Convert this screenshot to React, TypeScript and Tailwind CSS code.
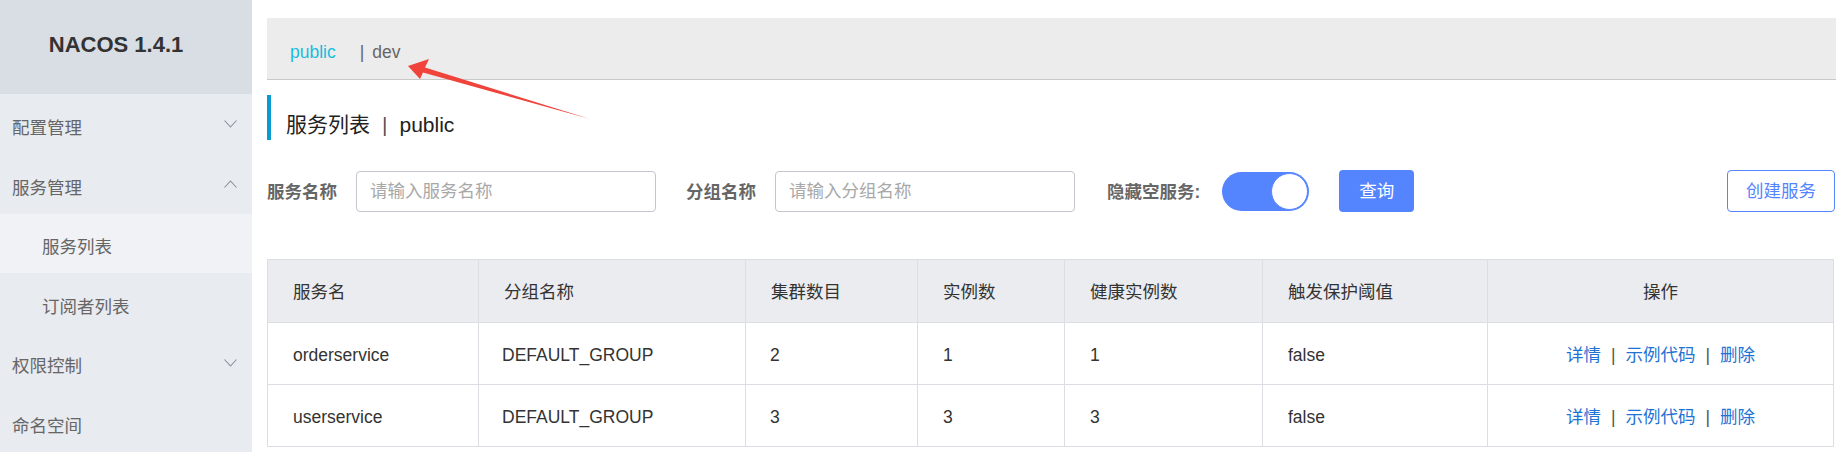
import React from "react";

const FONT = { fontFamily: '"Liberation Sans", Arial, "Noto Sans CJK SC", sans-serif' };

function Chevron({ up }: { up?: boolean }) {
  return (
    <svg width="13" height="8" viewBox="0 0 13 8" className="shrink-0">
      <path
        d={up ? "M0.5 7.5 L6.5 1 L12.5 7.5" : "M0.5 0.5 L6.5 7 L12.5 0.5"}
        fill="none"
        stroke="#8a8f99"
        strokeWidth="1.1"
      />
    </svg>
  );
}

function MenuItem({ label, chevron, up }: { label: string; chevron?: boolean; up?: boolean }) {
  return (
    <div className="h-[60px] flex items-center justify-between pl-[12px] pr-[15px] text-[17.5px] text-[#666]">
      <span className="pt-[8px]">{label}</span>
      {chevron ? <Chevron up={up} /> : null}
    </div>
  );
}

function SubItem({ label, active }: { label: string; active?: boolean }) {
  return (
    <div
      className={
        "h-[60px] flex items-center pl-[42px] text-[17.5px] text-[#666] " +
        (active ? "bg-[#f0f2f6]" : "")
      }
    >
      <span className="pt-[8px]">{label}</span>
    </div>
  );
}

const cols = [211, 267, 172, 147, 198, 225];

const rows = [
  { name: "orderservice", group: "DEFAULT_GROUP", cluster: "2", inst: "1", healthy: "1", threshold: "false" },
  { name: "userservice", group: "DEFAULT_GROUP", cluster: "3", inst: "3", healthy: "3", threshold: "false" },
];

export default function App() {
  return (
    <div
      className="relative flex w-[1836px] h-[452px] overflow-hidden bg-white text-[#333]"
      style={FONT}
    >
      {/* Sidebar */}
      <aside className="w-[252px] shrink-0 flex flex-col bg-[#e8ebf0]">
        <div className="h-[95px] bg-[#d9dde4] flex items-center justify-center pr-[20px] pb-[6px]">
          <span className="text-[22px] font-bold text-[#333]">NACOS 1.4.1</span>
        </div>
        <MenuItem label="配置管理" chevron />
        <MenuItem label="服务管理" chevron up />
        <SubItem label="服务列表" active />
        <SubItem label="订阅者列表" />
        <MenuItem label="权限控制" chevron />
        <MenuItem label="命名空间" />
      </aside>

      {/* Main */}
      <main className="flex-1 flex flex-col pl-[15px] pt-[18px]">
        <div className="h-[62px] bg-[#ececec] border-b border-[#c9c9c9] flex items-center pl-[23px] pt-[8px] text-[17.5px]">
          <span className="text-[#18bcdc]">public</span>
          <span className="ml-[24px] text-[#666]">|</span>
          <span className="ml-[8px] text-[#666]">dev</span>
        </div>

        <div className="mt-[15px] h-[45px] border-l-4 border-[#0b9bd0] pl-[15px] flex items-end text-[21px] text-[#222]">
          <span>服务列表</span>
          <span className="mx-[12px] text-[#555]">|</span>
          <span>public</span>
        </div>

        <div className="mt-[30px] flex items-center pr-[1px]">
          <span className="pt-[2px] text-[17.5px] font-bold text-[#666]">服务名称</span>
          <div className="ml-[19px] w-[300px] h-[41px] border border-[#c4c6cf] rounded-[4px] flex items-center pl-[13px] text-[17.5px] text-[#a8a8a8]">
            请输入服务名称
          </div>
          <span className="ml-[30px] pt-[2px] text-[17.5px] font-bold text-[#666]">分组名称</span>
          <div className="ml-[19px] w-[300px] h-[41px] border border-[#c4c6cf] rounded-[4px] flex items-center pl-[13px] text-[17.5px] text-[#a8a8a8]">
            请输入分组名称
          </div>
          <span className="ml-[32px] pt-[2px] text-[17.5px] font-bold text-[#666]">隐藏空服务:</span>
          <div className="ml-[22px] w-[87px] h-[39px] rounded-full bg-[#5584ff] flex items-center justify-end pr-[1px]">
            <div className="w-[37px] h-[37px] rounded-full bg-white border border-[#5584ff]" />
          </div>
          <div className="ml-[30px] w-[75px] h-[42px] rounded-[4px] bg-[#5584ff] text-white text-[17.5px] flex items-center justify-center">
            查询
          </div>
          <div className="ml-auto w-[108px] h-[42px] rounded-[4px] border border-[#5584ff] text-[#5584ff] text-[17.5px] flex items-center justify-center">
            创建服务
          </div>
        </div>

        <div className="mt-[47px] pr-[2px]">
          <table className="w-full table-fixed border-collapse text-[17.5px] text-[#333]">
            <colgroup>
              {cols.map((w, i) => (
                <col key={i} style={{ width: w }} />
              ))}
              <col />
            </colgroup>
            <thead>
              <tr className="h-[63px] bg-[#ebecf0]">
                {["服务名", "分组名称", "集群数目", "实例数", "健康实例数", "触发保护阈值"].map((h) => (
                  <th key={h} className="border border-[#dcdee3] text-left font-normal pl-[25px] pt-[2px]">
                    {h}
                  </th>
                ))}
                <th className="border border-[#dcdee3] text-center font-normal pt-[2px]">操作</th>
              </tr>
            </thead>
            <tbody>
              {rows.map((r) => (
                <tr key={r.name} className="h-[62px]">
                  <td className="border border-[#dcdee3] pl-[25px] pt-[3px]">{r.name}</td>
                  <td className="border border-[#dcdee3] pl-[23px] pt-[3px]">{r.group}</td>
                  <td className="border border-[#dcdee3] pl-[24px] pt-[3px]">{r.cluster}</td>
                  <td className="border border-[#dcdee3] pl-[25px] pt-[3px]">{r.inst}</td>
                  <td className="border border-[#dcdee3] pl-[25px] pt-[3px]">{r.healthy}</td>
                  <td className="border border-[#dcdee3] pl-[25px] pt-[3px]">{r.threshold}</td>
                  <td className="border border-[#dcdee3] text-center pt-[3px]">
                    <span className="text-[#1f73d4]">详情</span>
                    <span className="mx-[10px] text-[#555]">|</span>
                    <span className="text-[#1f73d4]">示例代码</span>
                    <span className="mx-[10px] text-[#555]">|</span>
                    <span className="text-[#1f73d4]">删除</span>
                  </td>
                </tr>
              ))}
            </tbody>
          </table>
        </div>
      </main>

      {/* Red annotation arrow */}
      <svg
        className="absolute left-0 top-0 pointer-events-none"
        width="1836"
        height="452"
        viewBox="0 0 1836 452"
      >
        <polygon
          points="408,66 429,59 425,67.5 590,119 423,72.5 420,79"
          fill="#f0433b"
        />
      </svg>
    </div>
  );
}
